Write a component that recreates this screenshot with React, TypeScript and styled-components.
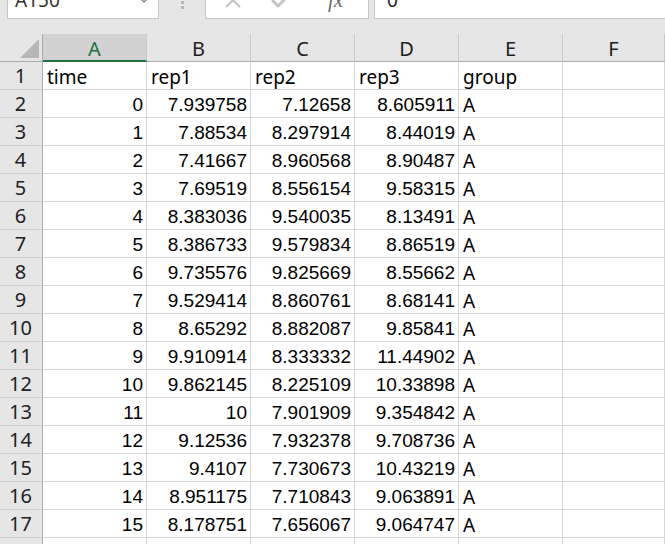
import React from "react";
import styled, { createGlobalStyle, css } from "styled-components";

const Global = createGlobalStyle`
  html, body { margin: 0; padding: 0; }
  body {
    background: #e6e6e6;
    overflow: hidden;
    width: 665px;
    height: 544px;
  }
`;

const Page = styled.div`
  width: 665px;
  height: 544px;
  overflow: hidden;
  background: #e6e6e6;
  display: flex;
  flex-direction: column;
`;

const Toolbar = styled.div`
  display: flex;
  align-items: stretch;
  height: 38px;
  margin-top: -19px;
  padding-left: 7px;
  flex-shrink: 0;
`;

const NameBox = styled.div`
  position: relative;
  box-sizing: border-box;
  width: 152px;
  background: #fff;
  border: 1px solid #c6c6c6;
  display: flex;
  align-items: center;
  padding-left: 7px;
  font-family: "Noto Sans", "Liberation Sans", sans-serif;
  font-size: 19px;
  color: #333;
`;

const Caret = styled.svg`
  position: absolute;
  right: 10px;
  top: 16px;
`;

const Dots = styled.div`
  width: 46px;
  display: flex;
  flex-direction: column;
  align-items: center;
  justify-content: center;
  gap: 2px;
  padding-top: 4px;
  span {
    width: 3px;
    height: 3px;
    background: #b5b5b5;
  }
`;

const FormulaButtons = styled.div`
  box-sizing: border-box;
  width: 164px;
  background: #fff;
  border: 1px solid #c6c6c6;
  display: flex;
  align-items: center;
  padding-left: 18px;
  gap: 28px;
`;

const FxText = styled.span`
  font-family: "Liberation Serif", serif;
  font-style: italic;
  font-size: 21px;
  color: #6a6a6a;
  margin-left: 8px;
`;

const FormulaInput = styled.div`
  box-sizing: border-box;
  flex: 1;
  margin-left: 5px;
  margin-right: -4px;
  background: #fff;
  border: 1px solid #c6c6c6;
  display: flex;
  align-items: center;
  padding-left: 12px;
  font-family: "Noto Sans", "Liberation Sans", sans-serif;
  font-size: 19px;
  color: #222;
`;

const Sheet = styled.div`
  margin-top: 15px;
  display: grid;
  grid-template-columns: 43px repeat(5, 104px) 1fr;
  grid-auto-rows: 28px;
  background: #fff;
`;

const Corner = styled.div`
  position: relative;
  box-sizing: border-box;
  background: #e6e6e6;
  border-right: 1px solid #ababab;
  border-bottom: 1px solid #ababab;
  &::after {
    content: "";
    position: absolute;
    right: 3px;
    bottom: 3px;
    width: 19px;
    height: 19px;
    background: #b6b6b6;
    clip-path: polygon(100% 0, 100% 100%, 0 100%);
  }
`;

const ColHead = styled.div<{ $active?: boolean }>`
  box-sizing: border-box;
  background: #e6e6e6;
  border-right: 1px solid #c9c9c9;
  border-bottom: 1px solid #ababab;
  display: flex;
  align-items: center;
  justify-content: center;
  font-family: "Noto Sans", "Liberation Sans", sans-serif;
  font-size: 20px;
  color: #222;
  padding-top: 1px;
  ${(p) =>
    p.$active &&
    css`
      background: #d2d2d2;
      color: #217346;
      border-bottom: 2px solid #217346;
      padding-top: 2px;
    `}
`;

const RowHead = styled.div`
  box-sizing: border-box;
  background: #e6e6e6;
  border-right: 1px solid #ababab;
  border-bottom: 1px solid #d0d0d0;
  display: flex;
  align-items: center;
  justify-content: center;
  font-family: "Noto Sans", "Liberation Sans", sans-serif;
  font-size: 20px;
  color: #222;
  padding-right: 1px;
`;

const Cell = styled.div<{ $num?: boolean }>`
  box-sizing: border-box;
  border-right: 1px solid #d4d4d4;
  border-bottom: 1px solid #d4d4d4;
  display: flex;
  align-items: center;
  padding: 2px 3px 0 4px;
  white-space: nowrap;
  overflow: hidden;
  color: #000;
  justify-content: ${(p) => (p.$num ? "flex-end" : "flex-start")};
  font-family: ${(p) =>
    p.$num ? `"Liberation Sans", Arial, sans-serif` : `"Noto Sans", "Liberation Sans", sans-serif`};
  font-size: 19px;
`;

const cols = ["A", "B", "C", "D", "E", "F"];

type Row = (string | number)[];

const data: Row[] = [
  ["time", "rep1", "rep2", "rep3", "group"],
  [0, 7.939758, 7.12658, 8.605911, "A"],
  [1, 7.88534, 8.297914, 8.44019, "A"],
  [2, 7.41667, 8.960568, 8.90487, "A"],
  [3, 7.69519, 8.556154, 9.58315, "A"],
  [4, 8.383036, 9.540035, 8.13491, "A"],
  [5, 8.386733, 9.579834, 8.86519, "A"],
  [6, 9.735576, 9.825669, 8.55662, "A"],
  [7, 9.529414, 8.860761, 8.68141, "A"],
  [8, 8.65292, 8.882087, 9.85841, "A"],
  [9, 9.910914, 8.333332, 11.44902, "A"],
  [10, 9.862145, 8.225109, 10.33898, "A"],
  [11, 10, 7.901909, 9.354842, "A"],
  [12, 9.12536, 7.932378, 9.708736, "A"],
  [13, 9.4107, 7.730673, 10.43219, "A"],
  [14, 8.951175, 7.710843, 9.063891, "A"],
  [15, 8.178751, 7.656067, 9.064747, "A"],
  ["", "", "", "", ""],
];

export default function App() {
  return (
    <Page>
      <Global />
      <Toolbar>
        <NameBox>
          A150
          <Caret width="8" height="5" viewBox="0 0 8 5">
            <path d="M1 1 L4 4 L7 1" fill="none" stroke="#777" strokeWidth="1.2" />
          </Caret>
        </NameBox>
        <Dots>
          <span />
          <span />
          <span />
        </Dots>
        <FormulaButtons>
          <svg width="18" height="18" viewBox="0 0 18 18">
            <path d="M2 2 L16 16 M16 2 L2 16" stroke="#c4c4c4" strokeWidth="2.2" fill="none" />
          </svg>
          <svg width="22" height="18" viewBox="0 0 22 18">
            <path d="M2 9 L8 15 L20 3" stroke="#c4c4c4" strokeWidth="3" fill="none" />
          </svg>
          <FxText>fx</FxText>
        </FormulaButtons>
        <FormulaInput>0</FormulaInput>
      </Toolbar>
      <Sheet>
        <Corner />
        {cols.map((c) => (
          <ColHead key={c} $active={c === "A"}>
            {c}
          </ColHead>
        ))}
        {data.map((row, ri) => (
          <React.Fragment key={ri}>
            <RowHead>{ri + 1}</RowHead>
            {row.map((v, ci) => (
              <Cell key={ci} $num={typeof v === "number"}>
                {String(v)}
              </Cell>
            ))}
            <Cell />
          </React.Fragment>
        ))}
      </Sheet>
    </Page>
  );
}
